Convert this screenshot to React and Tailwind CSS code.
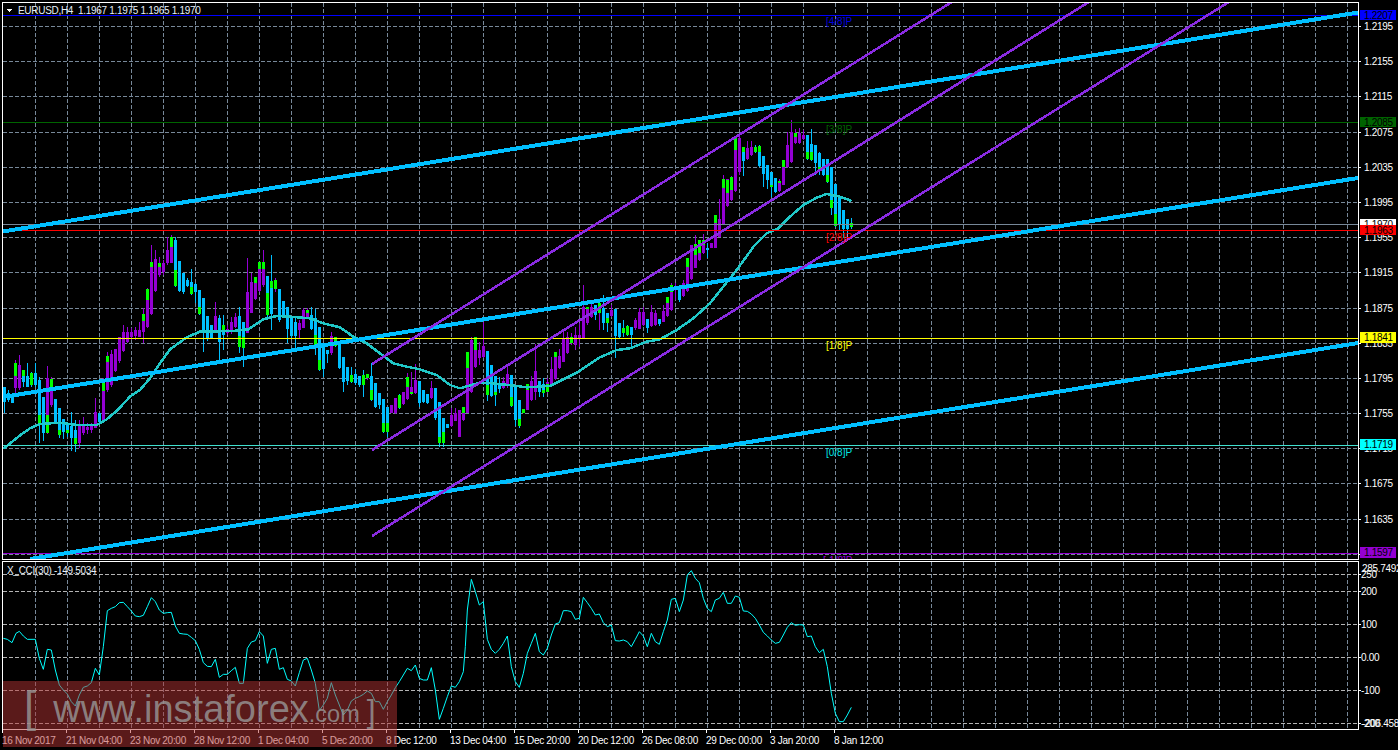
const P = '#9400d3';
const B = '#00bfff';

// candles are read off the picture: [x, colour, bodyTop, bodyBottom, wickTop, wickBottom, greenTop, greenBottom]
// in 3x coordinates of three crops, converted by toReal below
const seg1 = [
  [12,B,410,455,410,488],[24,B,430,450,420,455],[36,B,440,458,430,458],[46,P,378,415,330,440,340,378],
  [58,P,345,413,315,420],[70,B,378,395,360,410,360,378],[82,B,378,410,340,412],[94,B,378,405,365,410,370,405],
  [106,B,370,405,338,410],[118,B,390,520,380,578,495,520],[130,B,440,550,440,572],[142,P,385,550,348,552,495,550],
  [154,P,388,465,380,470,388,420],[166,B,447,515,447,520],[178,B,475,555,475,565,540,555],[190,B,507,545,507,568],
  [202,B,520,550,515,560,540,550],[214,B,528,565,485,602],[226,B,540,582,510,606,565,582],[238,P,525,578,510,595],
  [250,P,525,550,500,555],[262,P,530,540,520,552],[274,P,522,540,518,550],[286,P,487,533,445,535],
  [298,B,488,515,488,520],[310,P,423,515,385,515,390,423],[322,P,318,420,305,425,318,335],[334,P,312,405,300,410],
  [346,P,298,363,298,365],[358,P,262,333,262,340],[370,P,245,303,225,305],[382,P,245,275,230,280],
  [394,P,245,262,235,270],[406,P,240,258,230,270],[418,P,240,260,215,262],[430,P,213,245,175,280,192,213],
  [442,P,117,232,115,235,117,150],[454,P,50,192,-15,195,36,50],[466,P,27,123,0,125],[478,P,40,75,20,80,40,50],
  [490,P,38,65,30,75],[502,P,0,40,-40,45],[514,P,-30,38,-45,40,-40,-10],[526,B,-30,108,-40,110,60,108],
  [538,B,33,122,33,125],[550,B,70,125,70,132],[562,B,90,108,85,110],[574,B,95,132,58,135,110,132],
  [586,B,103,125,100,160],[598,B,120,192,120,195,170,192],[610,B,145,245,145,305],[622,B,197,268,197,272],
  [634,B,225,265,225,265],[646,P,197,240,155,250],[658,B,205,275,195,330],[670,B,225,255,195,300,225,240],
  [682,P,237,250,225,255],[694,P,215,245,200,252],[706,P,200,230,190,235],[718,B,197,290,170,310,258,290],
  [730,B,215,293,215,350,260,293],[742,P,127,248,25,250],[754,P,95,190,70,190],[766,P,95,147,80,150,80,100],
  [778,P,37,122,37,125,37,58],[790,P,37,105,0,110,37,58],[802,B,78,195,78,205,130,195],[814,B,93,193,15,240,93,115],
  [826,P,90,118,85,125,90,118],[838,B,117,210,117,215],[850,B,153,195,153,205],[862,B,170,237,170,280],
  [874,B,200,258,200,268],[886,B,215,258,200,300],[898,P,218,240,210,265],[910,P,180,233,175,235],
  [922,P,180,200,175,205,180,190],[934,B,195,237,172,240],[946,B,205,285,178,315,255,285],[958,B,232,360,232,362,330,360],
  [970,B,280,358,280,380],[982,B,300,312,300,340],[994,P,258,310,245,315],[1006,B,262,288,262,292,262,288],
  [1018,B,280,353,280,358],[1030,B,320,395,320,425],[1042,B,352,392,352,405],[1054,B,375,395,350,398,375,395],
  [1066,B,372,400,358,405],[1078,B,378,405,378,410],[1090,B,375,405,360,440,375,405],[1102,P,372,385,372,390,372,385],
  [1114,B,378,450,340,452,420,450],[1126,B,400,472,400,475],[1138,B,430,465,430,478],[1150,B,447,545,447,548,520,545],
  [1162,B,470,545,470,560,520,545],[1174,P,465,490,465,490],[1186,P,445,490,445,492],[1198,B,435,475,432,478,435,475],
  [1210,P,427,462,425,465],[1222,P,380,448,370,450,380,410],[1234,P,410,433,365,435,425,433],[1246,P,390,430,342,432],
  [1258,B,393,460,393,470],[1270,B,420,455,420,460],[1282,B,433,458,433,462],[1294,P,415,445,392,447],
  [1306,B,415,505,415,510],[1318,B,455,578,455,592,560,578],[1330,B,503,578,503,590,545,578],[1342,B,522,535,522,535],
  [1354,P,495,528,475,530],[1366,P,490,513,475,513],[1378,P,480,560,480,560],
];
const seg2 = [
  [10,P,480,510,470,512,470,490],[22,P,305,490,305,490,305,355],[34,P,270,425,262,428],[46,P,262,350,262,355,262,300],
  [58,P,300,325,275,345],[70,P,287,322,215,325],[82,B,303,435,303,452,405,435],[94,B,345,438,345,440],
  [106,B,378,435,378,468,425,435],[118,B,403,417,380,430],[130,P,393,415,380,417],[142,P,372,403,345,415],
  [154,B,375,467,375,470,440,467],[166,B,408,510,408,528],[178,B,450,528,450,535,508,528],[190,B,477,490,477,490,477,490],
  [202,P,420,480,403,480,403,420],[214,P,392,450,378,452],[226,P,363,425,283,450],[238,B,393,427,393,440],
  [250,B,403,430,385,440,420,430],[262,P,395,427,385,430,403,427],[274,P,357,407,322,410],[286,P,320,387,305,390,305,320],
  [298,P,318,355,298,357],[310,P,268,335,245,337],[322,P,262,310,245,312],[334,P,262,280,250,285,262,280],
  [346,P,255,285,230,300],[358,P,255,263,218,290],[370,P,170,263,105,263],[382,P,175,220,170,225,170,178],
  [394,P,170,200,150,205],[406,B,165,195,165,210],[418,P,160,190,150,240,160,190],[430,B,175,220,135,240],
  [442,B,190,220,190,245,205,220],[454,P,180,197,165,200],[466,B,177,258,177,325],[478,B,220,262,220,265],
  [490,B,235,248,210,260,235,248],[502,B,228,255,225,258,228,255],[514,B,232,255,232,295],[526,P,210,235,205,240],
  [538,P,185,237,175,238],[550,P,185,225,170,228],[562,B,207,235,207,250],[574,P,187,227,165,230],
  [586,P,190,225,180,228],[598,B,207,222,207,228],[610,P,183,215,165,217],[622,P,140,198,140,200,140,158],
  [634,P,105,180,100,182,105,125],[646,P,108,115,100,150,108,115],[658,B,112,150,105,155],[670,P,100,137,90,140],
  [682,P,25,123,25,125,25,52],
];
const seg3 = [
  [94,P,435,537,435,540],[106,P,433,505,405,505,433,465],[118,P,430,480,420,482,420,460],[130,P,420,460,403,462,420,435],
  [142,B,443,450,430,475],[154,P,430,443,428,445],[166,P,345,443,345,445,345,370],[178,P,358,410,298,412],
  [190,P,237,372,225,375,237,265],[202,P,237,318,237,320,240,280],[214,P,232,300,228,302,232,270],[226,P,113,273,113,275,113,150],
  [238,P,113,215,108,225],[250,B,140,183,140,228,140,155],[262,P,145,178,122,180],[274,P,142,165,122,167],
  [286,B,142,157,135,160,142,157],[298,B,138,198,135,200,138,155],[310,B,168,222,168,262],[322,B,195,240,195,268],
  [334,B,215,262,215,290,255,262],[346,B,235,275,235,278],[358,P,243,273,238,275,243,250],[370,P,200,255,180,255,180,200],
  [382,P,135,200,95,203],[394,P,95,185,60,188],[406,P,98,130,88,132,98,110],[418,P,98,130,85,132],
  [430,P,105,118,90,120],[442,B,105,178,105,180,155,178],[454,B,132,180,88,182,155,180],[466,B,135,190,135,225],
  [478,B,160,212,155,225,200,212],[490,B,178,225,178,228],[502,B,178,245,178,250,225,245],[514,B,200,325,200,345,300,325],
  [526,B,252,378,252,380,342,378],[538,B,295,375,295,390],[550,B,330,388,330,415],[562,B,357,388,357,420],
  [574,B,370,382,355,388,370,382],
];

const toReal = (seg, ox, oy) =>
  seg.map(([x, c, t, b, wt, wb, gt, gb]) => ({
    x: Math.round(ox + x / 3),
    c,
    t: oy + t / 3,
    b: oy + b / 3,
    wt: oy + wt / 3,
    wb: oy + wb / 3,
    gt: gt === undefined ? null : oy + gt / 3,
    gb: gb === undefined ? null : oy + gb / 3,
  }));

const candles = [...toReal(seg1, 0, 250), ...toReal(seg2, 460, 250), ...toReal(seg3, 660, 100)];

const pts = (list, ox, oy) => list.map(([x, y]) => `${ox + x / 3},${oy + y / 3}`).join(' ');

const ma =
  pts([[10,596],[30,580],[60,556],[90,535],[120,522],[180,518],[230,525],[290,525],[320,508],[350,483],[390,440],[420,420],[450,385],[480,340],[510,298],[560,262],[600,245],[700,243],[745,238],[790,208],[830,198],[870,200],[930,205],[970,220],[1020,232],[1060,260],[1100,280],[1140,310],[1180,340],[1220,350],[1260,358],[1310,375],[1350,405],[1380,415]], 0, 250) +
  ' ' +
  pts([[60,398],[100,400],[170,408],[200,412],[270,408],[350,368],[420,322],[470,300],[510,295],[560,275],[600,268],[650,240],[700,205],[750,160],[790,110],[830,60],[870,5]], 460, 250) +
  ' ' +
  pts([[280,440],[320,400],[355,385],[390,350],[430,315],[470,293],[500,282],[540,290],[575,303]], 660, 100);

const cci =
  pts([[10,265],[22,268],[36,278],[48,250],[58,244],[70,258],[82,268],[106,268],[118,325],[130,358],[142,298],[154,300],[166,360],[178,405],[190,420],[202,432],[214,455],[226,468],[238,435],[250,412],[262,408],[274,398],[286,355],[298,375],[310,290],[322,182],[334,175],[346,170],[358,158],[370,157],[382,170],[394,183],[406,198],[418,200],[430,196],[442,170],[454,143],[466,155],[478,180],[490,190],[502,188],[514,187],[526,228],[538,250],[550,252],[562,253],[574,262],[586,272],[598,298],[610,338],[622,349],[634,350],[646,328],[658,382],[670,373],[682,373],[694,362],[706,352],[718,400],[730,400],[742,295],[754,276],[766,272],[778,245],[790,258],[802,340],[814,298],[826,295],[838,358],[850,353],[862,388],[874,393],[886,408],[898,368],[910,330],[922,325],[934,360],[946,400],[958,482],[970,465],[982,445],[994,398],[1006,435],[1018,465],[1030,495],[1042,480],[1054,453],[1066,445],[1078,440],[1090,433],[1102,423],[1114,430],[1126,455],[1138,455],[1150,478],[1162,455],[1174,435],[1186,413],[1198,395],[1210,375],[1222,355],[1234,362],[1246,345],[1258,385],[1270,390],[1282,390],[1294,353],[1306,420],[1318,508],[1330,475],[1342,440],[1354,408],[1366,412],[1378,395]], 0, 550) +
  ' ' +
  pts([[10,365],[16,290],[22,180],[34,88],[46,125],[58,165],[70,155],[82,268],[94,298],[106,310],[118,298],[130,280],[142,258],[154,350],[166,395],[178,412],[190,370],[202,310],[214,280],[226,250],[238,305],[250,315],[262,295],[274,255],[286,222],[298,218],[310,182],[322,182],[334,185],[346,208],[358,205],[370,142],[382,158],[394,175],[406,195],[418,192],[430,218],[442,230],[454,225],[466,272],[478,273],[490,270],[502,275],[514,290],[526,268],[538,245],[550,258],[562,290],[574,250],[586,275],[598,283],[610,245],[622,210],[634,148],[646,145],[658,185],[670,150],[682,75],[694,62],[706,85],[718,98],[730,145],[742,175],[754,185],[766,150],[778,145],[790,127],[802,160],[814,160],[826,138],[838,142],[850,183],[862,184],[874,192],[886,205],[898,225],[910,247],[922,258],[934,270],[946,280],[958,277],[970,255],[982,232],[994,218],[1006,226],[1018,224],[1030,225],[1042,260],[1054,258],[1066,290],[1078,308],[1090,298],[1102,350],[1114,430],[1126,490],[1138,515],[1150,515],[1162,495],[1174,472]], 460, 550);

const gridX = Array.from({ length: 42 }, (_, i) => 35.5 + 32 * i);
const gridY = Array.from({ length: 16 }, (_, i) => Math.floor(26.5 + 35.19 * i) + 0.5);
const cciY = [574.5, 591.5, 624.5, 657.5, 690.5, 723.5];

const priceTicks = ['1.2195','1.2155','1.2115','1.2075','1.2035','1.1995','1.1955','1.1915','1.1875','1.1835','1.1795','1.1755','1.1715','1.1675','1.1635',''];
const boxes = [
  ['1.2207', 'fill-[#0000ff]', 10, 10],
  ['1.2085', 'fill-[#006400]', 117, 10],
  ['1.1970', 'fill-white', 219, 10],
  ['1.1963', 'fill-[#ff0000]', 225, 10],
  ['1.1841', 'fill-[#ffff00]', 332, 11],
  ['1.1719', 'fill-[#00ffff]', 439, 11],
  ['1.1597', 'fill-[#9400d3]', 547, 11],
];
const hLines = [
  [15.5, '#0000ff'],
  [122.5, '#006400'],
  [224.5, '#778899'],
  [230.5, '#ff0000'],
  [338.5, '#ffff00'],
  [445.5, '#40e0d0'],
  [553.5, '#9400d3'],
];
const murrey = [
  ['[4/8]P', 'fill-[#0000e0]', 21],
  ['[3/8]P', 'fill-[#006400]', 129],
  ['[2/8]P', 'fill-[#ff0000]', 237],
  ['[1/8]P', 'fill-[#ffff00]', 345.5],
  ['[0/8]P', 'fill-[#00e5e5]', 452],
  ['[-1/8]P', 'fill-[#9400d3]', 560],
];
const trend = [
  [3, 231.5, 1358, 12.5],
  [3, 397, 1358, 178],
  [30, 559, 1358, 343],
];
const channel = [
  [372, 364, 955, 0],
  [372, 450, 1092, 0],
  [372, 536, 1232, 0],
];
const times = ['16 Nov 2017','21 Nov 04:00','23 Nov 20:00','28 Nov 12:00','1 Dec 04:00','5 Dec 20:00','8 Dec 12:00','13 Dec 04:00','15 Dec 20:00','20 Dec 12:00','26 Dec 08:00','29 Dec 00:00','3 Jan 20:00','8 Jan 12:00'];

function Grid({ ys, top, bottom, rowColor }) {
  return (
    <>
      {gridX.map((x) => (
        <line key={x} x1={x} x2={x} y1={top} y2={bottom} stroke="#778899" strokeDasharray="4 2" />
      ))}
      {ys.map((y) => (
        <line key={y} x1={3} x2={1358} y1={y} y2={y} stroke={rowColor} strokeDasharray="4 2" />
      ))}
    </>
  );
}

function Candle({ d }) {
  return (
    <g>
      <rect x={d.x} y={d.wt} width={1} height={d.wb - d.wt} fill={d.c} />
      <rect x={d.x - 1} y={d.t} width={3} height={d.b - d.t} fill={d.c} />
      {d.gt !== null && <rect x={d.x - 1} y={d.gt} width={3} height={d.gb - d.gt} fill="#00ff00" />}
    </g>
  );
}

export default function App() {
  return (
    <div className="relative w-[1398px] h-[750px] bg-black overflow-hidden flex flex-col pt-[2px] pl-[2px] font-['Liberation_Sans',sans-serif] text-[10px] tracking-[-0.3px]">
      <div className="flex h-[558px]">
        <div className="relative w-[1357px] border border-white">
          <svg className="block w-[1355px] h-[556px]" viewBox="3 3 1355 556" shapeRendering="crispEdges">
            <Grid ys={gridY} top={3} bottom={559} rowColor="#778899" />
            {candles.map((d, i) => (
              <Candle key={i} d={d} />
            ))}
            <polyline points={ma} fill="none" stroke="#20c8c8" strokeWidth="2.5" />
            {hLines.map(([y, c]) => (
              <line key={y} x1={3} x2={1358} y1={y} y2={y} stroke={c} />
            ))}
            {trend.map(([x1, y1, x2, y2]) => (
              <line key={y1} x1={x1} y1={y1} x2={x2} y2={y2} stroke={B} strokeWidth="4" />
            ))}
            {channel.map(([x1, y1, x2, y2]) => (
              <line key={y1} x1={x1} y1={y1} x2={x2} y2={y2} stroke="#8a2be2" strokeWidth="2.5" />
            ))}
            {murrey.map(([t, c, y]) => (
              <text key={t} x={t === '[-1/8]P' ? 823 : 826} y={y} dominantBaseline="central" className={c + ' tracking-normal'}>
                {t}
              </text>
            ))}
            <polygon points="6.5,9 12.5,9 9.5,12.5" fill="#fff" />
            <text x={18} y={10.5} dominantBaseline="central" xmlSpace="preserve" className="fill-[#e8f0f8]">
              EURUSD,H4  1.1967 1.1975 1.1965 1.1970
            </text>
          </svg>
        </div>
        <svg className="block w-[39px] h-[558px]" viewBox="1359 2 39 558" shapeRendering="crispEdges">
          {gridY.map((y, i) => (
            <g key={y}>
              <line x1={1359} x2={1361} y1={y} y2={y} stroke="#fff" />
              {priceTicks[i] && (
                <text x={1364} y={y} dominantBaseline="central" className="fill-white">
                  {priceTicks[i]}
                </text>
              )}
            </g>
          ))}
          {boxes.map(([t, c, y, h]) => (
            <g key={t}>
              <rect x={1360} y={y} width={36} height={h} className={c} />
              <text x={1364} y={y + h / 2} dominantBaseline="central" className="fill-black">
                {t}
              </text>
            </g>
          ))}
        </svg>
      </div>

      <div className="flex h-[169px] mt-[1px]">
        <div className="relative w-[1357px] border border-white">
          <svg className="block w-[1355px] h-[167px]" viewBox="3 562 1355 167" shapeRendering="crispEdges">
            <Grid ys={cciY} top={562} bottom={729} rowColor="#b4b4b4" />
            <polyline points={cci} fill="none" stroke="#00ffff" shapeRendering="auto" />
            <text x={7} y={570.5} dominantBaseline="central" className="fill-[#e8f0f8]">
              X_CCI(30) -149.5034
            </text>
          </svg>
        </div>
        <svg className="block w-[39px] h-[169px]" viewBox="1359 561 39 169" shapeRendering="crispEdges">
          {cciY.map((y) => (
            <line key={y} x1={1359} x2={1361} y1={y} y2={y} stroke="#fff" />
          ))}
          <text x={1362} y={568} dominantBaseline="central" className="fill-white">285.7492</text>
          <text x={1361} y={574.5} dominantBaseline="central" className="fill-white">250</text>
          <text x={1361} y={591.5} dominantBaseline="central" className="fill-white">200</text>
          <text x={1361} y={624.5} dominantBaseline="central" className="fill-white">100</text>
          <text x={1361} y={657.5} dominantBaseline="central" className="fill-white">0.00</text>
          <text x={1361} y={690.5} dominantBaseline="central" className="fill-white">-100</text>
          <text x={1361} y={723.5} dominantBaseline="central" className="fill-white">-200</text>
          <text x={1362} y={723} dominantBaseline="central" className="fill-white">-206.458</text>
        </svg>
      </div>

      <div className="flex h-[20px] text-white">
        {times.map((t) => (
          <div key={t} className="relative w-[64px] shrink-0 pt-[3px] whitespace-nowrap">
            <span className="absolute left-0 top-0 w-px h-[3px] bg-white" />
            {t}
          </div>
        ))}
      </div>

      {/* watermark sits over the indicator pane and the time axis */}
      <div className="absolute left-[3px] top-[681px] w-[394px] h-[66px] bg-[#b43434]/50 flex items-baseline pl-[21px] text-[#999999]/80 tracking-normal pt-[4px]">
        <span className="text-[44px] font-light leading-none mr-[17px]">[</span>
        <span className="text-[38px] leading-none">www.instaforex</span>
        <span className="text-[23.5px] leading-none">.com</span>
        <span className="text-[32px] leading-none ml-[7px]">]</span>
      </div>
    </div>
  );
}
